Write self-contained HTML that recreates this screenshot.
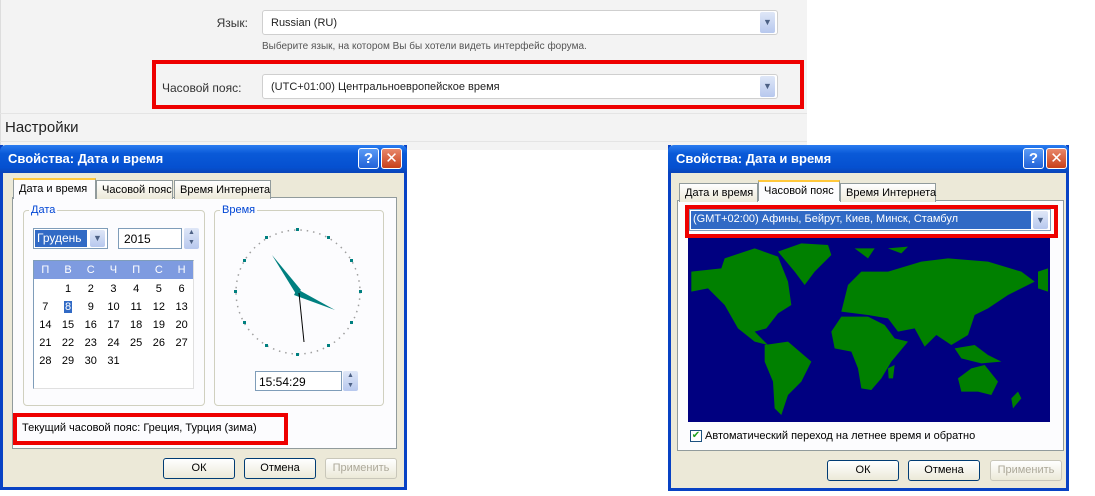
<!DOCTYPE html>
<html><head><meta charset="utf-8"><style>
*{box-sizing:border-box;margin:0;padding:0}
body{width:1095px;height:496px;background:#fff;position:relative;overflow:hidden;font-family:"Liberation Sans","DejaVu Sans",sans-serif;font-size:11px;color:#000}
.a{position:absolute}
.top{left:0;top:0;width:807px;height:150px;background:#f3f3f3;border-left:1px solid #ddd}
.sel{background:#fff;border:1px solid #cfcfcf;border-radius:3px;height:25px;font-size:11px;padding:6px 8px;color:#222}
.dd{width:15px;height:21px;background:linear-gradient(#dfe7f7,#b7c8ee);border-radius:2px;color:#4d6185;font-size:9px;text-align:center;line-height:21px}
.red{border:4px solid #e00}
.dlg{background:#ece9d8;border:3px solid #0842c4;border-top:none}
.title{background:linear-gradient(#2b7cf0,#0a5ad8 30%,#0550d0 80%,#0a44b8);color:#fff;font-weight:bold;font-size:13px;padding:6px 8px;border-radius:6px 6px 0 0}
.tb{width:21px;height:21px;border:1px solid #fff;border-radius:3px;color:#fff;font-weight:bold;text-align:center;font-size:15px;line-height:19px}
.tab{background:linear-gradient(#fff,#ece9d8);border:1px solid #919b9c;border-bottom:none;height:19px;padding:3px 5px;font-size:11px;white-space:nowrap}
.tab.on{background:#fcfcfe;border-top:2px solid #ffc83c;height:21px}
.panel{background:#fcfcfe;border:1px solid #919b9c}
.grp{border:1px solid #d0d0bf;border-radius:4px}
.gl{background:#fcfcfe;color:#0046d5;padding:0 2px;font-size:11px}
.btn{border:1px solid #003c74;border-radius:3px;background:linear-gradient(#fff,#ece9d8);text-align:center;font-size:11px;line-height:18px;height:21px;width:72px}
.dis{color:#aca899;border-color:#c9c7ba}
.cal td{width:22.6px;text-align:center;height:18px;font-size:11px;padding-top:2px}
.cal tr:first-child td{padding-top:0}
</style></head><body>
<div class="a top"></div>
<div class="a" style="left:0;top:113px;width:807px;border-top:1px solid #e4e4e4"></div>
<div class="a" style="left:0;top:141px;width:807px;border-top:1px solid #e4e4e4"></div>
<div class="a" style="left:200px;top:16px;width:48px;text-align:right;font-size:12px;color:#333">Язык:</div>
<div class="a sel" style="left:262px;top:10px;width:516px">Russian (RU)</div>
<div class="a dd" style="left:760px;top:12px">&#9660;</div>
<div class="a" style="left:262px;top:41px;font-size:10px;color:#555">Выберите язык, на котором Вы бы хотели видеть интерфейс форума.</div>
<div class="a red" style="left:152px;top:60px;width:652px;height:49px"></div>
<div class="a" style="left:162px;top:81px;font-size:12px;color:#333">Часовой пояс:</div>
<div class="a sel" style="left:262px;top:74px;width:516px">(UTC+01:00) Центральноевропейское время</div>
<div class="a dd" style="left:760px;top:76px">&#9660;</div>
<div class="a" style="left:5px;top:119px;font-size:15px;color:#222">Настройки</div>

<!-- LEFT DIALOG -->
<div class="a dlg" style="left:0;top:145px;width:407px;height:345px"></div>
<div class="a title" style="left:0;top:145px;width:407px;height:28px">Свойства: Дата и время</div>
<div class="a tb" style="left:358px;top:148px;background:linear-gradient(#5a9af5,#2262d8)">?</div>
<div class="a tb" style="left:381px;top:148px;background:linear-gradient(#e8876a,#c8401a)">✕</div>
<div class="a panel" style="left:12px;top:197px;width:385px;height:252px"></div>
<div class="a tab on" style="left:13px;top:178px;width:83px">Дата и время</div>
<div class="a tab" style="left:96px;top:180px;width:77px">Часовой пояс</div>
<div class="a tab" style="left:174px;top:180px;width:97px">Время Интернета</div>
<div class="a grp" style="left:23px;top:210px;width:182px;height:196px"></div>
<div class="a gl" style="left:29px;top:204px">Дата</div>
<div class="a grp" style="left:214px;top:210px;width:170px;height:196px"></div>
<div class="a gl" style="left:220px;top:204px">Время</div>
<div class="a" style="left:33px;top:228px;width:75px;height:21px;background:#fff;border:1px solid #7f9db9"></div>
<div class="a" style="left:35px;top:230px;width:52px;height:17px;background:#316ac5;color:#fff;font-size:12px;padding:1px 2px">Грудень</div>
<div class="a dd" style="left:90px;top:230px;height:17px;line-height:17px">&#9660;</div>
<div class="a" style="left:118px;top:228px;width:64px;height:21px;background:#fff;border:1px solid #7f9db9;font-size:12px;padding:3px 5px">2015</div>
<div class="a dd" style="left:184px;top:228px;height:21px;line-height:10px;font-size:7px">▲<br>▼</div>
<div class="a" style="left:33px;top:260px;width:161px;height:129px;background:#fff;border:1px solid #7f9db9;border-right-color:#e0e0e0;border-bottom-color:#e0e0e0">
<table class="cal" style="border-collapse:collapse;width:159px">
<tr style="background:#7e9be0;color:#fff"><td>П</td><td>В</td><td>С</td><td>Ч</td><td>П</td><td>С</td><td>Н</td></tr>
<tr><td></td><td>1</td><td>2</td><td>3</td><td>4</td><td>5</td><td>6</td></tr>
<tr><td>7</td><td><span style="background:#316ac5;color:#fff;padding:0 1px">8</span></td><td>9</td><td>10</td><td>11</td><td>12</td><td>13</td></tr>
<tr><td>14</td><td>15</td><td>16</td><td>17</td><td>18</td><td>19</td><td>20</td></tr>
<tr><td>21</td><td>22</td><td>23</td><td>24</td><td>25</td><td>26</td><td>27</td></tr>
<tr><td>28</td><td>29</td><td>30</td><td>31</td><td></td><td></td><td></td></tr>
</table></div>
<svg class="a" style="left:228px;top:222px" width="140" height="140" viewBox="228 222 140 140">
<circle cx="298" cy="292" r="62" fill="none" stroke="#a0a0a0" stroke-width="1.5" stroke-dasharray="1.5 4.9"/>
<g fill="#008080">
<rect x="296" y="228" width="3" height="3"/><rect x="296" y="353" width="3" height="3"/><rect x="234" y="290" width="3" height="3"/><rect x="359" y="290" width="3" height="3"/>
<rect x="327" y="236" width="3" height="3"/><rect x="350" y="259" width="3" height="3"/><rect x="350" y="321" width="3" height="3"/><rect x="327" y="344" width="3" height="3"/>
<rect x="265" y="344" width="3" height="3"/><rect x="243" y="321" width="3" height="3"/><rect x="243" y="259" width="3" height="3"/><rect x="265" y="236" width="3" height="3"/>
<polygon points="272,255 301,290 296,294"/>
<polygon points="335,310 297,289 294,295"/>
</g>
<line x1="299" y1="293" x2="304" y2="342" stroke="#000" stroke-width="1"/>
</svg>
<div class="a" style="left:255px;top:371px;width:87px;height:20px;background:#fff;border:1px solid #7f9db9;font-size:12px;padding:3px 3px">15:54:29</div>
<div class="a dd" style="left:343px;top:371px;height:20px;line-height:10px;font-size:7px">▲<br>▼</div>
<div class="a red" style="left:13px;top:413px;width:275px;height:32px"></div>
<div class="a" style="left:22px;top:422px;font-size:11px">Текущий часовой пояс: Греция, Турция (зима)</div>
<div class="a btn" style="left:163px;top:458px">ОК</div>
<div class="a btn" style="left:244px;top:458px">Отмена</div>
<div class="a btn dis" style="left:325px;top:458px">Применить</div>

<!-- RIGHT DIALOG -->
<div class="a dlg" style="left:668px;top:145px;width:401px;height:346px"></div>
<div class="a title" style="left:668px;top:145px;width:401px;height:28px">Свойства: Дата и время</div>
<div class="a tb" style="left:1023px;top:148px;background:linear-gradient(#5a9af5,#2262d8)">?</div>
<div class="a tb" style="left:1046px;top:148px;background:linear-gradient(#e8876a,#c8401a)">✕</div>
<div class="a panel" style="left:677px;top:200px;width:387px;height:251px"></div>
<div class="a tab" style="left:679px;top:183px;width:79px">Дата и время</div>
<div class="a tab on" style="left:758px;top:180px;width:82px">Часовой пояс</div>
<div class="a tab" style="left:840px;top:183px;width:96px">Время Интернета</div>
<div class="a red" style="left:685px;top:205px;width:373px;height:33px"></div>
<div class="a" style="left:689px;top:209px;width:362px;height:22px;background:#fff;border:1px solid #7f9db9"></div>
<div class="a" style="left:691px;top:211px;width:340px;height:18px;background:#316ac5;color:#fff;font-size:11px;padding:2px 2px">(GMT+02:00) Афины, Бейрут, Киев, Минск, Стамбул</div>
<div class="a dd" style="left:1033px;top:211px;height:18px;line-height:18px">&#9660;</div>
<svg class="a" style="left:688px;top:238px" width="362" height="184" viewBox="0 9 1086 552" preserveAspectRatio="none">
<rect x="0" y="0" width="1095" height="570" fill="#000080"/>
<g fill="#008000">
<polygon points="10,110 100,100 110,70 200,40 270,65 300,140 310,210 270,235 235,280 200,290 240,330 200,320 150,280 110,210 60,160 10,170"/>
<polygon points="270,50 340,25 420,30 430,60 380,110 350,150 320,110"/>
<polygon points="230,330 300,320 370,380 340,440 300,480 280,540 260,520 255,440 230,380"/>
<polygon points="460,230 480,150 520,110 600,110 700,80 780,70 900,80 1000,110 1040,140 960,180 900,220 860,240 840,300 790,330 745,300 710,335 680,280 630,290 600,250 540,240"/>
<polygon points="430,290 460,245 540,245 590,270 620,310 660,320 610,380 580,430 550,465 520,460 510,400 490,350 440,340"/>
<polygon points="810,430 850,400 890,390 930,440 910,480 870,470 820,470"/>
<polygon points="800,340 860,330 900,360 940,380 880,385 820,370"/>
<polygon points="1050,110 1080,100 1080,170 1050,160"/>
<polygon points="970,490 990,470 1000,490 975,520"/>
<polygon points="600,400 620,390 615,430 602,430"/>
<polygon points="500,40 560,40 540,70"/><polygon points="600,40 660,35 640,55"/>
</g>
</svg>
<div class="a" style="left:690px;top:430px;width:12px;height:12px;background:#fff;border:1px solid #1c5180;color:#21a121;font-size:10px;line-height:10px;text-align:center">✔</div>
<div class="a" style="left:705px;top:430px;font-size:11px">Автоматический переход на летнее время и обратно</div>
<div class="a btn" style="left:827px;top:460px">ОК</div>
<div class="a btn" style="left:908px;top:460px">Отмена</div>
<div class="a btn dis" style="left:990px;top:460px">Применить</div>
</body></html>
